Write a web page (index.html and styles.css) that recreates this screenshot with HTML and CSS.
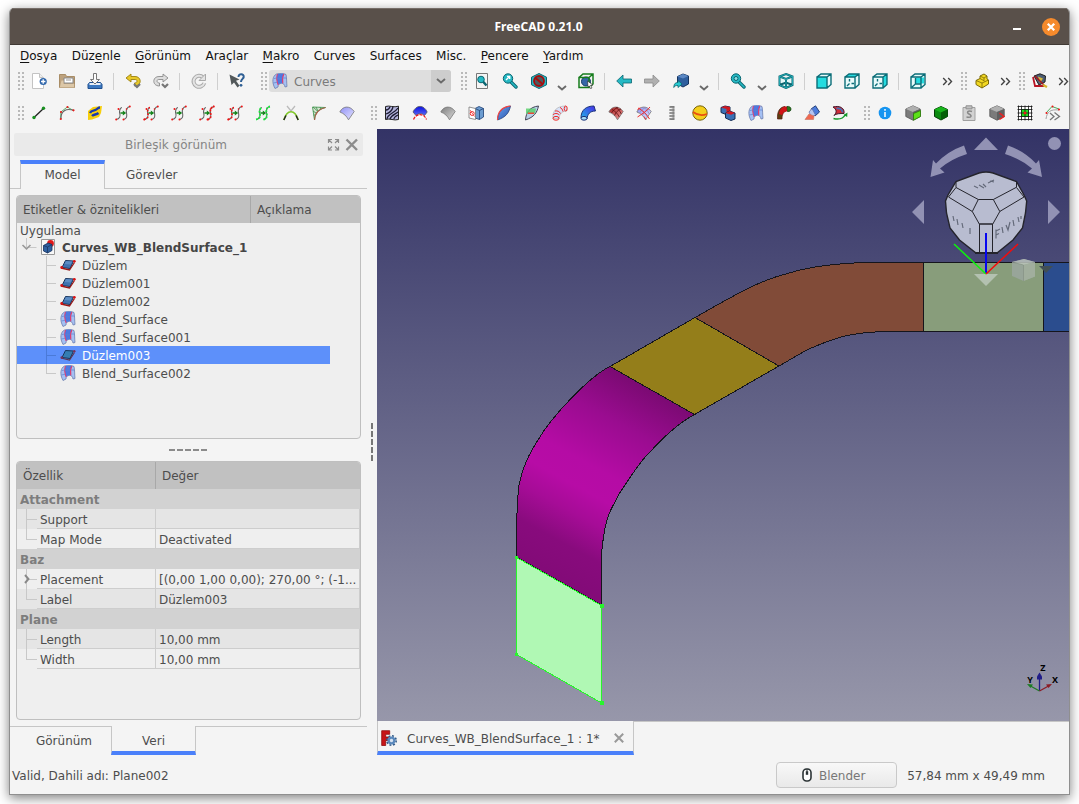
FILE: index.html
```html
<!DOCTYPE html>
<html lang="tr">
<head>
<meta charset="utf-8">
<title>FreeCAD 0.21.0</title>
<link rel="stylesheet" href="styles.css">
</head>
<body>
<svg class="defs" aria-hidden="true">
  <defs>
    <linearGradient id="gblue" x1="0" y1="0" x2="1" y2="1"><stop offset="0" stop-color="#6fa0ea"/><stop offset="1" stop-color="#2455b0"/></linearGradient>
    <linearGradient id="glil" x1="0" y1="0" x2="1" y2="1"><stop offset="0" stop-color="#8f8ff5"/><stop offset="1" stop-color="#e6e6ff"/></linearGradient>
    <linearGradient id="ggray" x1="0" y1="0" x2="1" y2="1"><stop offset="0" stop-color="#7c7c7c"/><stop offset="1" stop-color="#dcdcdc"/></linearGradient>
    <linearGradient id="gred" x1="0" y1="0" x2="1" y2="1"><stop offset="0" stop-color="#a81c1c"/><stop offset="1" stop-color="#f0a0a0"/></linearGradient>
    <linearGradient id="gfan" x1="0" y1="0" x2="0" y2="1"><stop offset="0" stop-color="#0a10e0"/><stop offset="1" stop-color="#5c68f4"/></linearGradient>
    <linearGradient id="gpipe" x1="0" y1="1" x2="1" y2="0"><stop offset="0" stop-color="#20b8e8"/><stop offset="1" stop-color="#4a28e8"/></linearGradient>

    <symbol id="new" viewBox="0 0 16 16"><path d="M1.500 .5h7l4 4v11h-11z" fill="#fff" stroke="#c3c3c3"/><path d="M8.500 .5v4h4" fill="#eee" stroke="#c3c3c3"/><circle cx="12.200" cy="8.500" r="3.600" fill="#2f66ab"/><path d="M12.200 6.300v4.400M10 8.500h4.400" stroke="#fff" stroke-width="1.300"/></symbol>
    <symbol id="open" viewBox="0 0 16 16"><path d="M.5 1.500h6l1 2h8v11h-15z" fill="#bda27e" stroke="#a98d66"/><path d="M5 5h9v5H5z" fill="#fff" stroke="#888"/><path d="M7 7h5" stroke="#999"/><path d="M.8 14.500L2.500 7.500h2V11H15.200v3.500z" fill="#dcc7a7"/></symbol>
    <symbol id="save" viewBox="0 0 16 16"><path d="M2.500 9.500h11l1.500 2v4H1v-4z" fill="#3c78c0" stroke="#1f4f8f"/><path d="M2.500 10h11v2h-11z" fill="#e8eef6"/><path d="M6.500.5h3v6h3L8 11 3.500 6.500h3z" fill="#fbfbfb" stroke="#777"/></symbol>
    <symbol id="undo" viewBox="0 0 16 16"><path d="M6 1L1 5l5 4V6.500h4c3 0 2.500 3.500-.5 3.500v3c7.500 0 7.500-9.500.5-9.500H6z" fill="#e8c828" stroke="#9b8010" stroke-width=".9"/><path d="M9 11l3 3 3-3" fill="none" stroke="#777" stroke-width="2.200"/></symbol>
    <symbol id="redo" viewBox="0 0 16 16"><path d="M10 1l5 4-5 4V6.500H6c-3 0-2.500 3.500.5 3.500v3c-7.500 0-7.500-9.500-.5-9.500h4z" fill="#ddd" stroke="#8c8c8c" stroke-width=".9"/><path d="M9 11l3 3 3-3" fill="none" stroke="#777" stroke-width="2.200"/></symbol>
    <symbol id="refresh" viewBox="0 0 16 16"><path d="M12 4.500A5.500 5.500 0 1 0 13.300 10" fill="none" stroke="#aaa" stroke-width="4"/><path d="M12 4.500A5.500 5.500 0 1 0 13.300 10" fill="none" stroke="#e4e4e4" stroke-width="2"/><path d="M14.500 1v6.500H8z" fill="#e4e4e4" stroke="#aaa"/></symbol>
    <symbol id="whats" viewBox="0 0 16 16"><path d="M.5 1.500l10 5-3.500 1.200 3.500 5-2 1.800-3.500-5L2.500 12z" fill="#52585a"/><path d="M9.500 4c0-4 5.700-3.500 5.200 0C14.400 6 12 6 12 9" fill="none" stroke="#2f5f94" stroke-width="2"/><circle cx="12" cy="12.300" r="1.400" fill="#2f5f94"/></symbol>
    <symbol id="blend" viewBox="0 0 16 16"><path d="M3 15.500C-.5 9 .5 3 4.500 1 8 .3 12 .3 14 1.500 14.800 5 14.500 9 15 13.500l-2 .5C12.500 11.500 11.500 10.300 9.500 10.300 7 10.500 6 12 6 14z" fill="#a4c0f4" stroke="#6d7fae" stroke-width=".8"/><path d="M5.500 1C8 .5 10 .6 12 1 10.300 4 10.200 7 10.800 10.300 8.500 10 7 10.500 6.200 12 4.600 8 4.300 4 5.500 1z" fill="#4a78e4"/><path d="M11.800 1C10.300 4 10.200 7 10.800 10.300M5.500 1C4.300 4 4.600 8 6.200 12" fill="none" stroke="#dc4070" stroke-width="1.100"/><path d="M2 5.500L4.500 5M1.500 10l3.500-.7M11 5h3.500M8.500 1C7.500 4 7.600 7 8.300 10M5 5.500h5" fill="none" stroke="#5c80d0" stroke-width=".7"/></symbol>

    <symbol id="fit" viewBox="0 0 16 16"><path d="M2.500.5h11v15h-11z" fill="#f4f4f4" stroke="#777"/><path d="M8.500 8l4 4.500" stroke="#0b6570" stroke-width="2.500"/><circle cx="7" cy="6.500" r="3.300" fill="#25b9c4" stroke="#0b6570"/></symbol>
    <symbol id="mag" viewBox="0 0 16 16"><path d="M8 8l6 6" stroke="#0b6570" stroke-width="3.400" stroke-linecap="round"/><path d="M8 8l6 6" stroke="#25b9c4" stroke-width="1.600" stroke-linecap="round"/><circle cx="6" cy="5.500" r="4.700" fill="#25b9c4" stroke="#0b6570"/><path d="M4 7l3.500-3.500M5 3.400h2.700V6" stroke="#fff" stroke-width="1.400" fill="none"/></symbol>
    <symbol id="mag2" viewBox="0 0 16 16"><path d="M8 8l6 6" stroke="#0b6570" stroke-width="3.400" stroke-linecap="round"/><path d="M8 8l6 6" stroke="#25b9c4" stroke-width="1.600" stroke-linecap="round"/><circle cx="6" cy="5.500" r="4.700" fill="#25b9c4" stroke="#0b6570"/><circle cx="6" cy="5.500" r="2" fill="#8fe0e4" stroke="#0b6570"/></symbol>
    <symbol id="nodraw" viewBox="0 0 16 16"><path d="M8 .5l7.500 3.700v7.600L8 15.500.5 11.800V4.200z" fill="#25b9c4" stroke="#0b6570"/><circle cx="8" cy="8" r="5" fill="#4c5c60" stroke="#a80c0c" stroke-width="1.800"/><path d="M4.500 5l7 6" stroke="#a80c0c" stroke-width="1.800"/></symbol>
    <symbol id="bbox" viewBox="0 0 16 16"><circle cx="8" cy="8.500" r="4.500" fill="#3666a8" stroke="#153a66"/><path d="M1 4.500h10v10H1zM1 4.500L5 1h10v10l-4 3.500M11 4.500L15 1" fill="none" stroke="#167c1c" stroke-width="1.500"/><path d="M9.500 8l5.500 4-2.500.4L14 15l-1.500.7-1.200-2.700L10 14z" fill="#fff" stroke="#222" stroke-width=".6"/></symbol>
    <symbol id="left" viewBox="0 0 16 16"><path d="M7 2v4h8.500v4H7v4L.7 8z" fill="#25b9c4" stroke="#0b6570" stroke-width=".8"/></symbol>
    <symbol id="right" viewBox="0 0 16 16"><path d="M9 2v4H.5v4H9v4l6.300-6z" fill="#b0b0b0" stroke="#8b8b8b" stroke-width=".8"/></symbol>
    <symbol id="link" viewBox="0 0 16 16"><path d="M4.500 3.500L10 1l5.500 2v8L10 14 4.500 11z" fill="#2f5f9e" stroke="#16345e"/><path d="M4.500 3.500L10 5.500l5.500-2.500L10 1z" fill="#5b88c4"/><path d="M.8 14.500C1 10 3 9.500 5 9.500V7.500L9 11l-4 3.500v-2c-2 0-3 0-4.200 2z" fill="#25c9d0" stroke="#0b6570" stroke-width=".8"/></symbol>
    <symbol id="iso" viewBox="0 0 16 16"><path d="M8 1l6.500 2.500v8.500L8 15l-6.500-3V3.500zM1.500 3.500L8 6l6.500-2.500M8 6v9M1.500 12L8 9.500l6.500 2.500" fill="#e5f8f8" stroke="#0b6570" stroke-width="2"/><path d="M8 1l6.500 2.500v8.500L8 15l-6.500-3V3.500zM1.500 3.500L8 6l6.500-2.500M8 6v9" fill="none" stroke="#2bc0c8" stroke-width=".7"/></symbol>
    <symbol id="cubef" viewBox="0 0 16 16"><path d="M1 4L5 1h10v10.500l-4 3.500H1z" fill="#e8fafa"/><path d="M1 4h10v11H1z" fill="#25dce0"/><path d="M1 4h10v11H1zM1 4L5 1h10v10.500l-4 3.500M11 4L15 1" fill="none" stroke="#0b6d78" stroke-width="1.400"/></symbol>
    <symbol id="cubet" viewBox="0 0 16 16"><path d="M1 4L5 1h10v10.500l-4 3.500H1z" fill="#e8fafa"/><path d="M1 4L5 1h10l-4 3z" fill="#25dce0"/><path d="M1 4h10v11H1zM1 4L5 1h10v10.500l-4 3.500M11 4L15 1M3 13l2.500-2.500M5.500 6v2.500M7.500 10.500H10" fill="none" stroke="#0b6d78" stroke-width="1.400"/></symbol>
    <symbol id="cuber" viewBox="0 0 16 16"><path d="M1 4L5 1h10v10.500l-4 3.500H1z" fill="#e8fafa"/><path d="M11 4L15 1v10.500L11 15z" fill="#25dce0"/><path d="M1 4h10v11H1zM1 4L5 1h10v10.500l-4 3.500M11 4L15 1M3 13l2.500-2.500M5.500 6v2.500M7.500 10.500H10" fill="none" stroke="#0b6d78" stroke-width="1.400"/></symbol>
    <symbol id="cubeb" viewBox="0 0 16 16"><path d="M1 4L5 1h10v10.500l-4 3.500H1z" fill="#e8fafa"/><path d="M5.500 4.500H14v6H5.500z" fill="#25dce0"/><path d="M1 4h10v11H1zM1 4L5 1h10v10.500l-4 3.500M11 4L15 1M5.500 5v6L2 14M6 11h5" fill="none" stroke="#0b6d78" stroke-width="1.400"/></symbol>
    <symbol id="part" viewBox="0 0 16 16"><path d="M2 7.500l4-2V3l4-2L13 3v3l1.500 1v4L8 15l-6-3.500z" fill="#f2d821" stroke="#7c6a08"/><path d="M2 7.500L8 10l6.500-3M8 10v5M6 5.500L10.500 8M6 3l4 2 3-2M10 5v2.500" fill="none" stroke="#7c6a08" stroke-width=".8"/></symbol>
    <symbol id="sketch" viewBox="0 0 16 16"><path d="M2 3l6-2.200L13.500 3 13 9l-6 3z" fill="#4c5c74" stroke="#222"/><path d="M6 3.500l5 2-3 4.500z" fill="#d4b83c"/><path d="M1 4l2 9h9" fill="none" stroke="#b81424" stroke-width="1.800"/><path d="M3 3l9 9" stroke="#a6181c" stroke-width="1.500"/><path d="M11 12l4 2" stroke="#d4b42c" stroke-width="2.200"/></symbol>

    <symbol id="line" viewBox="0 0 16 16"><path d="M3 12.500l9.500-9" stroke="#222" stroke-width="1.300"/><circle cx="3" cy="12.500" r="1.700" fill="#189020"/><circle cx="12.500" cy="3.300" r="1.700" fill="#189020"/></symbol>
    <symbol id="bez" viewBox="0 0 16 16"><path d="M1.800 14V7l6.500-5 6 3.500" fill="none" stroke="#38a048" stroke-width=".8"/><path d="M1.800 14C1.800 6 7 3 14.500 5.300" fill="none" stroke="#666" stroke-width="1.100"/><g fill="#e81c1c"><circle cx="1.800" cy="14" r="1.100"/><circle cx="2" cy="7" r="1.100"/><circle cx="8.500" cy="2" r="1.100"/><circle cx="14.500" cy="5.300" r="1.100"/></g></symbol>
    <symbol id="script" viewBox="0 0 16 16"><path d="M1 6l5-4 9-1-1 7-2 4-7 2.500-4 .5z" fill="#f7cf0c"/><path d="M3 8c2-4 4-1 7-4 1-1 2-1.500 3-1.500M5 11c2-2 4-1 6.500-3" fill="none" stroke="#1839b0" stroke-width="2.400"/></symbol>
    <symbol id="join" viewBox="0 0 16 16"><path d="M1 14.500C5 14 5.500 11 4.800 8.500S5 3 7 2.500M8.500 14.500C12 14 12.200 11 11.500 8S12 2 15 1.500" fill="none" stroke="#666" stroke-width="1.100"/><path d="M5.500 7.200h2.300V5.500L11.200 8 7.800 10.500V8.800H5.500z" fill="#15841c"/></symbol>
    <symbol id="dA" viewBox="0 0 16 16"><g fill="#ef1414"><circle cx="1.200" cy="14.500" r="1"/><circle cx="3.500" cy="4" r="1"/><circle cx="8.500" cy="14.500" r="1"/><circle cx="14.800" cy="1.500" r="1"/><circle cx="11.500" cy="4" r=".8"/></g></symbol>
    <symbol id="dL" viewBox="0 0 16 16"><path d="M1 14.500C5 14 5.500 11 4.800 8.500S5 3 7 2.500" fill="none" stroke="#ef1414" stroke-width="1.600" stroke-dasharray="1.600 1.800"/></symbol>
    <symbol id="dR" viewBox="0 0 16 16"><path d="M8.500 14.500C12 14 12.200 11 11.500 8S12 2 15 1.500" fill="none" stroke="#ef1414" stroke-width="1.800" stroke-dasharray="1.800 1.400"/></symbol>
    <symbol id="dG" viewBox="0 0 16 16"><path d="M1 14.500C5 14 5.500 11 4.800 8.500S5 3 7 2.500M8.500 14.500C12 14 12.200 11 11.500 8S12 2 15 1.500" fill="none" stroke="#14f03a" stroke-width="1.900" stroke-dasharray="1.800 1.200"/></symbol>
    <symbol id="ext" viewBox="0 0 16 16"><path d="M4 1l4 5 4-5" stroke="#bbb" stroke-width="1.300" fill="none"/><path d="M.8 15C4 4 12 4 15.200 15" fill="none" stroke="#80c828" stroke-width="1.700"/><path d="M.8 15l2.200-4.500M15.200 15L13 10.500" stroke="#222" stroke-width="1.400"/></symbol>
    <symbol id="comb" viewBox="0 0 16 16"><path d="M1.500 2l13 .5C8 4 4 7 3.500 15z" fill="#d3e4d0" stroke="#4c9858" stroke-width=".9"/><path d="M2 2l5 4.500M5 2l2 4M9 2l1 2.500M2 6l3 2M2.500 10l2 0" stroke="#3c9048" stroke-width=".8"/><path d="M14.500 2.500C8 4 4 7 3.500 15" fill="none" stroke="#a86048" stroke-width="1.200"/></symbol>
    <symbol id="fan" viewBox="0 0 16 16"><path d="M.8 7C4 .500 11 .500 15.200 6.500L9.500 14.800C7.500 11 5 8.500.8 7z" stroke="#777" stroke-width=".8"/></symbol>
    <symbol id="zebra" viewBox="0 0 16 16"><path d="M1.500 1.500C5 0 10 3 14.500 1.200V14.500C10 16 6 13 1.500 14.500z" fill="#b4b4dc" stroke="#222"/><path d="M3 14C3 9 11 8 14 3M6 14c1-4 6-5 8-7M10 14c0-2 2-3 4-4M2 9C5 8 8 6 9 2M2 5c2 0 3-1 4-3" fill="none" stroke="#1c1c34" stroke-width="1.300"/></symbol>
    <symbol id="fanb" viewBox="0 0 16 16"><path d="M4 8l9 0 1 5H3z" fill="#fff"/><path d="M1 7C4-.500 12-.500 15.200 7L12.500 10.500C10 8 6.500 8 4 10.500z" fill="url(#gfan)" stroke="#556" stroke-width=".8"/><path d="M1.500 14.500C4 8 12 8 14.500 14.500" fill="none" stroke="#ef1414" stroke-width="1.200" stroke-dasharray="3 1"/></symbol>
    <symbol id="box" viewBox="0 0 16 16"><path d="M7 3.500L11 1.500l4.500 2v8.500L11.500 14.500 7 13z" fill="#6c9cd0" stroke="#1d3f74" stroke-width=".8"/><path d="M11.500 5.500v9M7 3.500l4.500 2 4-2" fill="none" stroke="#1d3f74" stroke-width=".8"/><path d="M1 2l6.500 1.500v11l-6.500-1.500z" fill="#fff" stroke="#777" stroke-width=".8"/><circle cx="4.200" cy="8.500" r="2" fill="none" stroke="#ef3030"/><path d="M2 5l4.500 6.500" stroke="#ef3030" stroke-width=".8"/></symbol>
    <symbol id="leaf" viewBox="0 0 16 16"><path d="M1.500 15C2 7 6 2 14.500 1 13 8 10 12 1.500 15z" fill="url(#gblue)" stroke="#24407c" stroke-width=".8"/><path d="M1.500 15C1.500 7 6 2 14.500 1" fill="none" stroke="#f04848" stroke-width="1.200"/></symbol>
    <symbol id="leafg" viewBox="0 0 16 16"><path d="M1.500 15C2 7 6 2 14.500 1 13 8 10 12 1.500 15z" fill="#b8cfe8" stroke="#445"/><path d="M2 3.500h10L11 8.500H2z" fill="#55cf66" opacity=".8"/><path d="M4 8.300h6" stroke="#e84a38" stroke-width="1.400"/></symbol>
    <symbol id="tube" viewBox="0 0 16 16"><path d="M1 13.500C0 5 6 1 13.500 1l1.500 5c-5 0-7.500 3-8 7.500z" fill="#d8e2f8" stroke="#aaa" stroke-width=".6"/><g fill="none" stroke="#f02828"><ellipse cx="4" cy="13.300" rx="3" ry="1.900"/><path d="M1 10c1-2 5-2 6.300 0M3 6c2.500-.5 4.500.5 5.500 2.500M8 2.500C9.500 3 10.500 4.500 11 6.500"/><ellipse cx="13.700" cy="3.500" rx="1.500" ry="2.500"/></g></symbol>
    <symbol id="pipe" viewBox="0 0 16 16"><path d="M1 13C1 5 6 1 14 1l1.500 5C10 6 7.500 9 7 14z" fill="url(#gpipe)" stroke="#1c3478"/><ellipse cx="4" cy="13.300" rx="3" ry="1.900" fill="#a4daf6" stroke="#1c3478"/></symbol>
    <symbol id="grid" viewBox="0 0 16 16"><path d="M4 4.500C7 6 10 9 11.300 12M8 2.300C10 4 12 6 13.300 9M3.500 8C6 4.500 7 3.500 10 2.500M6.500 10.500C8 7 10 5 13 4" fill="none" stroke-width=".8"/></symbol>
    <symbol id="cross" viewBox="0 0 16 16"><path d="M1.500 12C6 9 11 6 14 2M2 3c4 2 9 6 11.500 11M4 2.500L1.500 5M8 11.500l2 3" fill="none" stroke="#f03030" stroke-width="1"/></symbol>
    <symbol id="spring" viewBox="0 0 16 16"><path d="M5.500 2h5M5.500 5h5M5.500 8h5M5.500 11h5M5.500 14h5" stroke="#555" stroke-width="1.500"/><path d="M5.800 2l4.500 1.500L5.800 5l4.500 1.500L5.800 8l4.500 1.500L5.800 11l4.500 1.500L5.800 14" fill="none" stroke="#999" stroke-width=".9"/></symbol>
    <symbol id="ball" viewBox="0 0 16 16"><circle cx="8" cy="8" r="7.200" fill="#f4cf1c" stroke="#75620e"/><path d="M1 7c4 3 9 4 14 2" fill="none" stroke="#e85010" stroke-width="1.800"/></symbol>
    <symbol id="solids" viewBox="0 0 16 16"><path d="M1 2.500L5 1l5 1v5l-4 2.500-5-2z" fill="#3c70b4" stroke="#142c54"/><path d="M1 2.500L5 1l5 1v5L6.500 9V4z" fill="#d01820"/><path d="M5.500 8l4-2 5.500 2v6L11 15.500 5.500 13z" fill="#3c70b4" stroke="#142c54"/><path d="M5.500 8l5.500 1.800L15 8 9.500 6z" fill="#d81820"/></symbol>
    <symbol id="elbow" viewBox="0 0 16 16"><path d="M1.500 14C1 6 4 2 9 1.500L10 6c-3 1-4 4-4 8z" fill="#5a4010" stroke="#5a1810" stroke-width=".7"/><path d="M3 9C4 3 7 1.500 11 1.500l.5 5c-3-.5-4 .5-5.500 3.500z" fill="#d01418"/><path d="M11 1.500c2.500-.5 4 1 4 2.500s-1 3-3.500 2.500z" fill="#2b7818" stroke="#0a3c0c" stroke-width=".7"/></symbol>
    <symbol id="cyl" viewBox="0 0 16 16"><path d="M7 4l4.500-3.200L15.500 7l-4.500 4z" fill="#4c7cdc" stroke="#26427c"/><path d="M5 7L8 3.500l3.500 6.500-4 2z" fill="#b5c4f0" stroke="#5868a8" stroke-width=".7"/><path d="M1 14.500l4-5.500 5 2-.5 3.500z" fill="#f06850" stroke="#c87868" stroke-width=".7"/></symbol>
    <symbol id="rev" viewBox="0 0 16 16"><path d="M1 2C8 0 13 3.500 12 8.500c-4 0-8 0-10 2C5 7.500 5 4.500 1 2z" fill="#cf2c38" stroke="#42182c"/><path d="M4.500 3.500c4-.5 6 1.500 6 4" fill="none" stroke="#4474b8" stroke-width="1.800"/><path d="M1.500 13.500c6 1.500 10-.5 12-4" fill="none" stroke="#12982a" stroke-width="1.400"/><path d="M11.500 10l4-2.500-.3 4.500z" fill="#12982a"/></symbol>
    <symbol id="info" viewBox="0 0 16 16"><circle cx="8" cy="8" r="6.300" fill="#1594f0"/><path d="M8 4v1.700M8 7v5" stroke="#fff" stroke-width="1.500"/></symbol>
    <symbol id="cubeg" viewBox="0 0 16 16"><path d="M.8 4L8 .8 15.200 4v7.500L8 15.200.8 11.500z" fill="#7b7b7b" stroke="#555" stroke-width=".8"/><path d="M.8 4L8 .8 15.200 4 8 7z" fill="#b0b0b0"/><path d="M8 7l7.200-3v7.500L8 15.200z" fill="#606060"/></symbol>
    <symbol id="gface" viewBox="0 0 16 16"><path d="M8.500 8.500l7-3v6L8.500 15.300z" fill="#5ce018" stroke="#2a7808" stroke-width=".8"/></symbol>
    <symbol id="green" viewBox="0 0 16 16"><path d="M1.500 4.500L8 1.500l6.500 3v7L8 15l-6.500-3.500z" fill="#0b8a10" stroke="#063c08"/><path d="M1.500 4.500L8 7.500l6.500-3L8 1.500z" fill="#18b41c"/><path d="M8 7.500l6.500-3v7L8 15z" fill="#066009"/></symbol>
    <symbol id="clip" viewBox="0 0 16 16"><path d="M2 2.500h12v13H2z" fill="#d2d2d2" stroke="#a0a0a0"/><path d="M5 .8h6v3H5z" fill="#c0c0c0" stroke="#909090"/><path d="M11 6.500C7 5 5 7.500 8 9s3 4-2.500 3" fill="none" stroke="#888" stroke-width="1.500"/></symbol>
    <symbol id="rarr" viewBox="0 0 16 16"><path d="M10.500 8l4.500 3.500-4.500 3" fill="none" stroke="#ee2020" stroke-width="1.500"/></symbol>
    <symbol id="gmap" viewBox="0 0 16 16"><path d="M1 1h14v14H1z" fill="#fff"/><path d="M4 4h8v8H4z" fill="#18e01e"/><path d="M.5 1.500h15M.5 4.500h15M.5 8h15M.5 11.500h15M.5 14.500h15M1.500.5v15M4.500.5v15M8 .5v15M11.500.5v15M14.500.5v15" fill="none" stroke="#111" stroke-width=".8"/><path d="M6.700 6.700h2.600v2.600H6.700z" fill="#ee1818"/></symbol>
    <symbol id="more2" viewBox="0 0 16 16"><path d="M1 8l6-6.500L14 4" fill="none" stroke="#38a048" stroke-width=".9"/><path d="M1 14C2 7 5 4 14 5" fill="none" stroke="#999" stroke-width=".9"/><path d="M5 8l4 3.500-4 3.500M9.500 7.500l5 4-5 3.500" fill="none" stroke="#777" stroke-width="1.300"/><g fill="#ef1414"><circle cx="1.500" cy="8" r="1"/><circle cx="7.500" cy="1.500" r="1"/><circle cx="14" cy="4.500" r="1"/></g></symbol>
    <symbol id="chev" viewBox="0 0 10 6"><path d="M1 1l4 3.500L9 1" fill="none" stroke="#6a6a6a" stroke-width="1.900"/></symbol>
    <symbol id="dbl" viewBox="0 0 11 9"><path d="M1.200 1L4.500 4.500 1.200 8M6.200 1l3.300 3.500L6.200 8" fill="none" stroke="#444" stroke-width="1.400"/></symbol>
    <symbol id="plane" viewBox="0 0 16 12"><path d="M5.500 1.500L13.500 2 10 9.500 2 8.500z" fill="#3f72b0" stroke="#17345c"/><path d="M6 2l6.500.5L10.500 5.500 4.500 5z" fill="#5c8cc4"/><path d="M1 9l8.500 2L14.500 3.500" fill="none" stroke="#981818" stroke-width="1.300"/><g fill="#d81414"><circle cx="1.700" cy="8.500" r="1.400"/><circle cx="14.300" cy="2.300" r="1.400"/></g></symbol>
    <symbol id="planes" viewBox="0 0 16 12"><path d="M5.500 1.500L13.500 2 10 9.500 2 8.500z" fill="#357db2" stroke="#17345c"/><path d="M1 9l8.500 2L14.500 3.500" fill="none" stroke="#5c3550" stroke-width="1.200"/><g fill="#7c3058"><circle cx="1.700" cy="8.500" r="1.200"/><circle cx="14.300" cy="2.300" r="1.200"/></g></symbol>
    <symbol id="doc" viewBox="0 0 14 16"><path d="M.5.5h13v15H.5z" fill="#f8f8f8" stroke="#999"/><circle cx="9.500" cy="4.500" r="3.400" fill="#e01818"/><path d="M2.500 6.500L7 4l4 1.500v6L6.500 14l-4-2z" fill="#2f60a0" stroke="#14305c" stroke-width=".8"/><path d="M2.500 6.500L6.500 8 11 5.500M6.500 8v6" fill="none" stroke="#14305c" stroke-width=".7"/></symbol>
  </defs>
</svg>

<main class="window">
  <header class="titlebar">
    <h1>FreeCAD 0.21.0</h1>
    <div class="winbtns">
      <span class="min"></span>
      <svg class="close" viewBox="0 0 18 18"><circle cx="9" cy="9" r="9" fill="#f58a2c"/><path d="M5.800 5.800l6.400 6.400M12.200 5.800l-6.400 6.400" stroke="#fff" stroke-width="2.300"/></svg>
    </div>
  </header>

  <nav class="menu">
    <span><u>D</u>osya</span><span>Düz<u>e</u>nle</span><span><u>G</u>örünüm</span><span>Araçlar</span><span><u>M</u>akro</span><span>Curves</span><span>Surfaces</span><span>Misc.</span><span><u>P</u>encere</span><span><u>Y</u>ardım</span>
  </nav>

  <div class="bar bar1">
    <i class="grip first"></i>
    <svg class="ic"><use href="#new"/></svg><svg class="ic"><use href="#open"/></svg><svg class="ic"><use href="#save"/></svg>
    <i class="sep"></i>
    <svg class="ic"><use href="#undo"/></svg><svg class="ic"><use href="#redo"/></svg>
    <i class="sep"></i>
    <svg class="ic"><use href="#refresh"/></svg>
    <i class="sep"></i>
    <svg class="ic"><use href="#whats"/></svg>
    <i class="grip combo-grip"></i>
    <div class="combo"><svg class="ic16"><use href="#blend"/></svg><span>Curves</span><b><svg class="chev"><use href="#chev"/></svg></b></div>
    <i class="grip after"></i>
    <svg class="ic"><use href="#fit"/></svg><svg class="ic"><use href="#mag"/></svg><svg class="ic menu-ic"><use href="#nodraw"/></svg>
    <svg class="drop"><use href="#chev"/></svg>
    <svg class="ic"><use href="#bbox"/></svg>
    <i class="sep"></i>
    <svg class="ic"><use href="#left"/></svg><svg class="ic"><use href="#right"/></svg><svg class="ic menu-ic"><use href="#link"/></svg>
    <svg class="drop"><use href="#chev"/></svg>
    <i class="sep"></i>
    <svg class="ic menu-ic"><use href="#mag2"/></svg>
    <svg class="drop"><use href="#chev"/></svg>
    <svg class="ic"><use href="#iso"/></svg>
    <i class="sep"></i>
    <svg class="ic"><use href="#cubef"/></svg><svg class="ic"><use href="#cubet"/></svg><svg class="ic"><use href="#cuber"/></svg>
    <i class="sep"></i>
    <svg class="ic"><use href="#cubeb"/></svg>
    <svg class="dbl wide"><use href="#dbl"/></svg>
    <i class="grip"></i>
    <svg class="ic"><use href="#part"/></svg>
    <svg class="dbl"><use href="#dbl"/></svg>
    <i class="grip"></i>
    <svg class="ic"><use href="#sketch"/></svg>
    <svg class="dbl"><use href="#dbl"/></svg>
  </div>

  <div class="bar bar2">
    <i class="grip first"></i>
    <svg class="ic"><use href="#line"/></svg><svg class="ic"><use href="#bez"/></svg><svg class="ic"><use href="#script"/></svg>
    <svg class="ic"><use href="#join"/><use href="#dA"/></svg>
    <svg class="ic"><use href="#join"/><use href="#dA"/><use href="#dL"/></svg>
    <svg class="ic"><use href="#join"/><use href="#dA"/></svg>
    <svg class="ic"><use href="#join"/><use href="#dA"/><use href="#dR"/></svg>
    <svg class="ic"><use href="#join"/><use href="#dL"/><use href="#dA"/></svg>
    <svg class="ic"><use href="#join"/><use href="#dG"/></svg>
    <svg class="ic"><use href="#ext"/></svg><svg class="ic"><use href="#comb"/></svg>
    <svg class="ic fl"><use href="#fan"/></svg>
    <i class="grip mid"></i>
    <svg class="ic"><use href="#zebra"/></svg><svg class="ic"><use href="#fanb"/></svg><svg class="ic fg"><use href="#fan"/></svg>
    <svg class="ic"><use href="#box"/></svg><svg class="ic"><use href="#leaf"/></svg><svg class="ic"><use href="#leafg"/></svg>
    <svg class="ic"><use href="#tube"/></svg><svg class="ic"><use href="#pipe"/></svg>
    <svg class="ic fr"><use href="#fan"/><use href="#grid"/></svg>
    <svg class="ic fp"><use href="#fan"/><use href="#grid"/><use href="#cross"/></svg>
    <svg class="ic"><use href="#spring"/></svg><svg class="ic"><use href="#ball"/></svg><svg class="ic"><use href="#solids"/></svg>
    <svg class="ic"><use href="#blend"/></svg><svg class="ic"><use href="#elbow"/></svg><svg class="ic"><use href="#cyl"/></svg><svg class="ic"><use href="#rev"/></svg>
    <i class="grip mid"></i>
    <svg class="ic"><use href="#info"/></svg>
    <svg class="ic"><use href="#cubeg"/><use href="#gface"/></svg>
    <svg class="ic"><use href="#green"/></svg><svg class="ic"><use href="#clip"/></svg>
    <svg class="ic"><use href="#cubeg"/><use href="#rarr"/></svg>
    <svg class="ic"><use href="#gmap"/></svg><svg class="ic"><use href="#more2"/></svg>
  </div>

  <div class="body">
    <section class="side">
      <div class="docktitle"><span>Birleşik görünüm</span>
        <svg class="dockic" viewBox="0 0 32 14" fill="none" stroke="#8c8c8c"><path d="M1.500 5V1.500H5M1.500 1.500l3.500 3.500M8 1.500h3.500V5M11.500 1.500L8 5M1.500 8.500V12H5M1.500 12L5 8.500M8 12h3.500V8.500M11.500 12L8 8.500" stroke-width="1.200"/><path d="M19.500 1.500l10.500 10.500M30 1.500L19.500 12" stroke-width="2.400"/></svg>
      </div>
      <div class="tabs"><div class="tab on">Model</div><div class="tab">Görevler</div></div>

      <div class="panel tree">
        <div class="head"><span>Etiketler &amp; öznitelikleri</span><span>Açıklama</span></div>
        <div class="root">Uygulama</div>
        <div class="node doc"><svg class="lines" viewBox="0 0 24 18"><path d="M9.500 0v9M9.500 9.500h10" stroke="#c8c8c8"/><path d="M5.500 7l4 3.800 4-3.800" fill="none" stroke="#999" stroke-width="1.600"/></svg><svg class="docic"><use href="#doc"/></svg><b>Curves_WB_BlendSurface_1</b></div>
        <div class="kids">
          <div class="node"><svg class="plane"><use href="#plane"/></svg>Düzlem</div>
          <div class="node"><svg class="plane"><use href="#plane"/></svg>Düzlem001</div>
          <div class="node"><svg class="plane"><use href="#plane"/></svg>Düzlem002</div>
          <div class="node"><svg class="bs"><use href="#blend"/></svg>Blend_Surface</div>
          <div class="node"><svg class="bs"><use href="#blend"/></svg>Blend_Surface001</div>
          <div class="node sel"><svg class="plane"><use href="#planes"/></svg>Düzlem003</div>
          <div class="node last"><svg class="bs"><use href="#blend"/></svg>Blend_Surface002</div>
        </div>
      </div>

      <div class="hsplit"><i></i><i></i><i></i><i></i><i></i></div>

      <div class="panel props">
        <div class="head"><span>Özellik</span><span>Değer</span></div>
        <div class="group">Attachment</div>
        <div class="prop alt"><span>Support</span><span></span></div>
        <div class="prop end"><span>Map Mode</span><span>Deactivated</span></div>
        <div class="group">Baz</div>
        <div class="prop"><span><svg class="exp" viewBox="0 0 6 10"><path d="M1 1l3.500 4L1 9" fill="none" stroke="#888" stroke-width="1.900"/></svg>Placement</span><span>[(0,00 1,00 0,00); 270,00 °; (-1...</span></div>
        <div class="prop alt end"><span>Label</span><span>Düzlem003</span></div>
        <div class="group">Plane</div>
        <div class="prop alt"><span>Length</span><span>10,00 mm</span></div>
        <div class="prop end"><span>Width</span><span>10,00 mm</span></div>
      </div>

      <div class="btabs"><div class="tab">Görünüm</div><div class="tab on">Veri</div><div class="rest"></div></div>
    </section>

    <div class="vsplit"><i></i><i></i><i></i><i></i><i></i></div>

    <section class="main">
      <svg class="view" viewBox="377 129 692 592">
        <defs>
          <linearGradient id="bg" x1="0" y1="0" x2="0" y2="1"><stop offset="0" stop-color="#333366"/><stop offset="1" stop-color="#9797aa"/></linearGradient>
          <linearGradient id="mag3" gradientUnits="userSpaceOnUse" x1="610" y1="366" x2="510" y2="550"><stop offset="0" stop-color="#7a0a72"/><stop offset=".22" stop-color="#9a0c90"/><stop offset=".46" stop-color="#b50ca5"/><stop offset=".58" stop-color="#b70ca6"/><stop offset=".7" stop-color="#a60c97"/><stop offset=".85" stop-color="#880b7d"/><stop offset="1" stop-color="#830b78"/></linearGradient>
        </defs>
        <path d="M377 129h692v592H377z" fill="url(#bg)"/>
        <g stroke="#15151c" stroke-width="1" shape-rendering="crispEdges">
          <path d="M695 317.500C712 308 728 298.500 745 290C760 282 772 277.500 788 273.300C800 269.800 810 267.500 821.700 266C836 264 850 262.700 870 262.500H923.500V331.500H888C875 331.700 863 332.500 851.700 334.700C845 335.700 838 337.500 831.700 340C822 343.500 813 347 805 351L779 366z" fill="#814b38"/>
          <path d="M923.500 262.500h120v69h-120z" fill="#889d7b"/>
          <path d="M1043.500 262.500h27v69h-27z" fill="#2b4d8e"/>
          <path d="M695 317.500L779 366 694.500 414.500 610 366.500z" fill="#947e1a"/>
          <path d="M610 366.500L694.500 414.500C677 424 664 437 648 454C641 461 635 470 629 479C621 490 616 499 611.700 508C606.500 519 604.500 528 603.500 537C602 547 601.500 555 601.500 560V605L516.500 557V540C516.500 520 517 505 518.500 489C519 484 520.500 478 523 470C526 461 531 451 536.700 442C545 428 556 414 569 400.700C582 387 596 373 610 366.500z" fill="url(#mag3)"/>
        </g>
        <g shape-rendering="crispEdges">
          <path d="M516.500 557.500L601.500 605.500V703L516.500 654.500z" fill="#b0f8b4" stroke="#28f52c"/>
          <path d="M515 556h3v3h-3zM600 604h4v4h-4zM515 653h3v3h-3zM600 701h4v4h-4z" fill="#28f52c"/>
        </g>

        <g fill="#9292b4">
          <path d="M974 150l12-12.500 12 12.500zM924 200v24L912 212zM1048 200v24l12-12z"/>
          <circle cx="1054.500" cy="143.500" r="6.500"/>
          <path d="M964 145.500l3 8.500Q951 159 940 168.500l4.500 4L930.500 177l2.500-17 3 3.500Q948 151 964 145.500zM1008 145.500l-3 8.500Q1021 159 1032 168.500l-4.500 4L1042 177l-3-17-3 3.500Q1024 151 1008 145.500z"/>
        </g>
        <path d="M974 274h24l-12 12z" fill="#b3c1b0"/>
        <path d="M945.500 201L948 195 956 181.500 979 173Q986 171 993 173L1016.500 181.500 1024 195 1026.700 201 1025.500 213 1022.500 228 1013 240 997 253H976L959.500 240 950 228 946.500 213z" fill="#b8bcd0" stroke="#24242c" stroke-width="1.400"/>
        <g fill="none" stroke="#24242c" stroke-width="1">
          <path d="M978.300 199.500h15l6.500 12-7 12.500h-13.500l-7-12.500zM956 187.500l22.300 12M1016 187.500l-22.700 12M948.500 197l23.800 14.500M1024 197l-24.300 14.500M979.500 252v-28h13v28M956 182v5.500l-7.500 9.500M1016.500 182v5.500l7.500 9.500"/>
        </g>
        <path d="M975 253h23" stroke="#24242c" stroke-width="2"/>
        <path d="M974 186l4 2M979 185l5 3M983 184l3 3M988 183l6-3M990 181l4 1M953 216l1 5M957 219l1 6M962 223l1 5M970 228v6M996 229.500v9M996 231l4-2M996 235l3-1.500M1002 227l1 6M1006 225l2 5 2-8M1013 220l1 6M1018 217l1 5M1021 216v3" stroke="#646a7a" stroke-width="1.200" fill="none"/>
        <path d="M986 233v40" stroke="#0606f0" stroke-width="2"/>
        <path d="M954 244l32 30" stroke="#0cf50c" stroke-width="1.500"/>
        <path d="M1018 244l-32 30" stroke="#f50c0c" stroke-width="1.500"/>
        <g opacity=".85"><path d="M1012 262l12-3 11 3v14.500l-11.500 4.500-11.500-5z" fill="#9ba79f"/><path d="M1012 262l11.500 3 11.500-3-11-3z" fill="#bcc5bd"/><path d="M1023.500 265l11.500-3v14.500l-11.500 4.500z" fill="#a6b2a4"/><path d="M1012 262l11.500 3v16" stroke="#7f8c82" fill="none" stroke-width=".6"/></g>
        <path d="M1039 266h14l-7 7z" fill="#414f55"/>

        <path d="M1039.500 691v-15" stroke="#201c88" stroke-width="1.300"/><path d="M1037 679.500v-3l2.500-4 2.500 4v3z" fill="#201c88"/>
        <path d="M1039.500 691l-9-5" stroke="#1c7c24" stroke-width="1.200"/><path d="M1027 684l6 .5-2.500 3.500z" fill="#1c7c24"/>
        <path d="M1039.500 691l9-5" stroke="#8c1c24" stroke-width="1.200"/><path d="M1052 684l-6 .5 2.500 3.500z" fill="#8c1c24"/>
        <g class="axis"><text x="1040.200" y="671">Z</text><text x="1027.200" y="683">Y</text><text x="1052" y="683">X</text></g>
      </svg>
      <div class="doctabs">
        <div class="doctab">
          <svg class="fc" viewBox="0 0 16 16"><path d="M.7.700h8v3.600h-4v2.700h3v3.500h-3v5h-4z" fill="#c81418" stroke="#8c0c10" stroke-width=".8"/><circle cx="10.500" cy="10.500" r="4.700" fill="none" stroke="#2f5684" stroke-width="1.600" stroke-dasharray="1.900 1.790"/><circle cx="10.500" cy="10.500" r="2.900" fill="#d7e3f2" stroke="#5a88bc" stroke-width="2.400"/></svg>
          <span>Curves_WB_BlendSurface_1 : 1*</span>
          <svg class="x" viewBox="0 0 10 10"><path d="M.8.8l8.400 8.400M9.200.8L.8 9.200" stroke="#999" stroke-width="2"/></svg>
        </div>
        <div class="rest"></div>
      </div>
    </section>
  </div>

  <footer class="status">
    <span class="msg">Valid, Dahili adı: Plane002</span>
    <button class="nav"><svg viewBox="0 0 10 14"><rect x="1" y="1" width="8" height="12" rx="3.500" fill="#fff" stroke="#2c3436" stroke-width="1.600"/><path d="M5 1v2.500" stroke="#2c3436"/><rect x="3.800" y="3.200" width="2.400" height="3.600" fill="#2c3436"/></svg><span>Blender</span></button>
    <span class="dim">57,84 mm x 49,49 mm</span>
  </footer>
</main>
</body>
</html>
```
FILE: styles.css
```css
* { box-sizing: border-box; }
body { margin: 0; padding: 8px 9px 9px; width: 1079px; height: 804px; overflow: hidden; background: #fff; font: 12px/18px "DejaVu Sans", sans-serif; color: #4d4d4d; white-space: nowrap; }
.defs { position: absolute; width: 0; height: 0; }
svg { display: block; flex: none; }
.window { width: 1061px; height: 787px; background: #f4f4f4; border: 1px solid #8f8f8f; border-top: 0; border-radius: 5px 5px 0 0; box-shadow: 0 3px 12px rgba(0,0,0,.5); display: flex; flex-direction: column; overflow: hidden; }

.titlebar { height: 37px; flex: none; background: #59504a; border-top: 1px solid #766e69; border-bottom: 1px solid #403934; display: flex; align-items: center; justify-content: flex-end; }
.titlebar h1 { flex: 1; margin: 0; padding-left: 54px; text-align: center; font: bold 12px "Noto Sans", sans-serif; color: #fff; }
.winbtns { display: flex; align-items: center; gap: 21px; padding-right: 9px; }
.min { width: 8px; height: 2px; margin-top: 5px; background: #fff; }
.close { width: 18px; height: 18px; }

.menu { height: 21px; flex: none; display: flex; align-items: center; gap: 14.4px; padding: 1px 10px 0; color: #111; }
.menu u { text-underline-offset: 2px; }

.bar { height: 32px; flex: none; display: flex; align-items: center; padding-bottom: 2px; }
.bar > * { flex: none; }
.bar2 { height: 31px; padding-bottom: 1px; }
.ic { width: 16px; height: 16px; margin: 0 6px; }
.ic.menu-ic { margin-left: 7px; }
.sep + .menu-ic.ic { margin-left: 6px; margin-right: 7px; }
.ic16 { width: 16px; height: 16px; }
.sep { width: 1px; height: 17px; margin: 0 5px 0 4px; background: #cfcfcf; }
.grip { width: 6px; height: 22px; margin: 0 1px 0 3px; background: repeating-linear-gradient(0deg, #f4f4f4 0 2px, transparent 2px 4px), linear-gradient(90deg, #b9b9b9 0 2px, transparent 2px 4px, #b9b9b9 4px 6px); }
.bar2 .grip { height: 18px; }
.grip.first { margin: 0 1px 0 8px; }
.grip.combo-grip { margin: 0 2px 0 10px; }
.grip.after { margin: 0 1px 0 10px; }
.bar2 .grip.mid { margin: 0 1px 0 10px; }
.combo { width: 182px; height: 22px; display: flex; align-items: center; background: #dedede; border-radius: 3px; overflow: hidden; color: #7a7a7a; padding-left: 3px; }
.combo span { flex: 1; padding: 1px 0 0 6px; }
.combo b { width: 20px; height: 22px; background: #cdcdcd; display: flex; align-items: center; justify-content: center; }
.chev { width: 10px; height: 6px; }
.drop { width: 10px; height: 6px; margin: 13px 5px 0 4px; }
.dbl { width: 11px; height: 9px; margin: 0 5px 0 4px; }
.dbl.wide { margin: 0 5px 0 10px; }
.fl { fill: url(#glil); } .fg { fill: url(#ggray); } .fr { fill: url(#gred); stroke: #601010; } .fp { fill: url(#glil); stroke: #9090b8; }

.body { display: flex; height: 626px; flex: none; }
.side { width: 357px; display: flex; flex-direction: column; }
.docktitle { height: 23px; margin: 4px 4px 0; display: flex; align-items: center; background: #eaeaea; border-radius: 2px; color: #858585; }
.docktitle span { flex: 1; text-align: center; padding-left: 11px; }
.dockic { width: 32px; height: 14px; margin-right: 4px; }
.tabs { display: flex; height: 29px; margin-top: 4px; }
.tabs::before { content: ""; width: 10px; border-bottom: 1px solid #c6c6c6; }
.tabs .tab { padding: 6px 21px 0; border-bottom: 1px solid #c6c6c6; flex: 1; }
.tabs .on { flex: none; width: 85px; padding: 2px 0 0; border: 1px solid #c6c6c6; border-top: 4px solid #4a80fa; border-bottom: 0; text-align: center; }
.panel { width: 345px; margin-left: 6px; background: #efefef; border: 1px solid #bfbfbf; border-radius: 4px; overflow: hidden; }
.tree { height: 244px; margin-top: 6px; }
.head { display: flex; height: 27px; background: #c1c1c1; line-height: 29px; }
.head span { height: 27px; padding-left: 6px; }
.head span + span { border-left: 1px solid #a8a8a8; }
.tree .head span:first-child { width: 233px; }
.root { height: 15px; line-height: 16px; padding-left: 3px; }
.node { height: 18px; display: flex; align-items: center; padding-top: 2px; }
.node svg, .kids .node::before { margin-top: -2px; }
.doc { color: #454545; }
.lines { width: 24px; height: 18px; }
.docic { width: 14px; height: 16px; margin-right: 7px; }
.kids .node { width: 313px; padding-left: 29px; }
.kids .node::before { content: ""; width: 10px; height: 18px; margin-right: 4px; background: linear-gradient(#c8c8c8, #c8c8c8) 0 9px / 10px 1px no-repeat, linear-gradient(#c8c8c8, #c8c8c8) 0 0 / 1px 18px no-repeat; }
.kids .last::before { background-size: 10px 1px, 1px 9px; }
.kids .sel::before { background: linear-gradient(#4a7ad8, #4a7ad8) 0 9px / 10px 1px no-repeat, linear-gradient(#4a7ad8, #4a7ad8) 0 0 / 1px 18px no-repeat; }
.kids .sel { background: #5d90fa; color: #fff; }
.plane { width: 16px; height: 12px; margin-right: 6px; }
.bs { width: 16px; height: 16px; margin-right: 6px; }
.hsplit { height: 22px; display: flex; align-items: center; justify-content: center; gap: 2px; padding-right: 2px; }
.hsplit i { width: 6px; height: 2px; background: #8b8b8b; }
.props { height: 259px; }
.props .head span:first-child { width: 138px; }
.group { height: 20px; line-height: 22px; padding-left: 3px; background: #d2d2d2; color: #7d7d7d; font-weight: bold; }
.prop { height: 20px; display: grid; grid-template: 20px / 138px 205px; line-height: 22px; background: #efefef; }
.prop.alt { background: #e5e5e5; }
.prop span { position: relative; border-bottom: 1px solid #cdcdcd; }
.prop span:first-child { margin-left: 20px; padding-left: 3px; }
.prop span:first-child::before { content: ""; position: absolute; left: -11px; top: 0; width: 11px; height: 20px; background: linear-gradient(#c8c8c8, #c8c8c8) 0 10px / 11px 1px no-repeat, linear-gradient(#c8c8c8, #c8c8c8) 0 0 / 1px 20px no-repeat; }
.prop.end span:first-child::before { background-size: 11px 1px, 1px 10px; }
.prop span + span { border-left: 1px solid #cdcdcd; border-right: 1px solid #cdcdcd; padding-left: 3px; }
.exp { position: absolute; left: -13px; top: 5px; width: 6px; height: 10px; }
.btabs { display: flex; height: 29px; margin-top: 6px; text-align: center; line-height: 29px; }
.btabs .tab { width: 101px; padding-left: 7px; border-top: 1px solid #c6c6c6; }
.btabs .on { width: 85px; padding: 0; line-height: 30px; border: solid #c6c6c6; border-width: 0 1px; border-bottom: 4px solid #4a80fa; }
.rest { flex: 1; border-top: 1px solid #c6c6c6; }
.vsplit { width: 10px; display: flex; flex-direction: column; align-items: center; justify-content: center; gap: 2px; }
.vsplit i { width: 2px; height: 6px; background: #777; }
.main { width: 692px; display: flex; flex-direction: column; }
.view { width: 692px; height: 592px; }
.axis { font: bold 9px "Noto Sans", sans-serif; fill: #000; }
.doctabs { display: flex; height: 34px; }
.doctab { width: 257px; height: 34px; display: flex; align-items: center; padding: 3px 0 0 3px; border: solid #c6c6c6; border-width: 0 1px; border-bottom: 4px solid #4a80fa; }
.doctab span { padding-top: 2px; }
.fc { width: 16px; height: 16px; margin-right: 10px; }
.doctab .x { width: 10px; height: 10px; margin-left: 14px; }
.status { flex: 1; display: flex; align-items: center; padding: 0 24px 0 2px; }
.msg, .dim, .nav span { padding-top: 2px; }
.msg { flex: 1; }
.nav { width: 121px; height: 26px; margin: 0 10px 0 0; display: flex; align-items: center; justify-content: center; gap: 7px; font: inherit; color: #777; background: linear-gradient(#f8f8f8, #e9e9e9); border: 1px solid #c9c9c9; border-radius: 4px; padding: 0 6px 0 0; }
.nav svg { width: 10px; height: 14px; }
```
